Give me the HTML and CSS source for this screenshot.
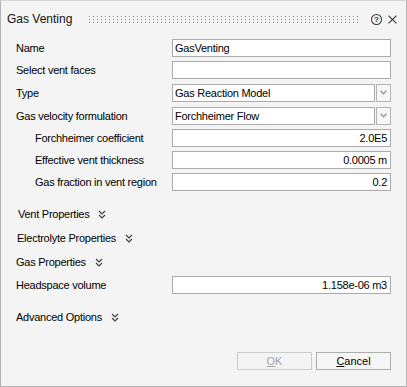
FILE: index.html
```html
<!DOCTYPE html>
<html>
<head>
<meta charset="utf-8">
<link rel="stylesheet" href="styles.css">
</head>
<body>
<div class="dialog">
  <div class="titlebar">
    <span class="title">Gas Venting</span>
    <svg class="grip" width="272" height="9">
      <defs>
        <pattern id="dots" width="4" height="3" patternUnits="userSpaceOnUse">
          <rect x="0" y="0" width="1" height="1" fill="#858585"/>
        </pattern>
      </defs>
      <rect x="0" y="0" width="272" height="9" fill="url(#dots)"/>
    </svg>
    <span class="help">?</span>
    <svg class="close" width="9" height="9" viewBox="0 0 9 9">
      <path d="M0.5 0.5 L8.5 8.5 M8.5 0.5 L0.5 8.5" stroke="#333" stroke-width="1.1" fill="none"/>
    </svg>
  </div>

  <div class="form">
    <div class="row">
      <span class="label">Name</span>
      <div class="field"><span class="input">GasVenting</span></div>
    </div>
    <div class="row">
      <span class="label">Select vent faces</span>
      <div class="field"><span class="input"></span></div>
    </div>
    <div class="row tall">
      <span class="label">Type</span>
      <div class="field combo"><span class="input">Gas Reaction Model</span><span class="dropbtn"><svg width="7" height="5" viewBox="0 0 7 5"><path d="M0.5 0.8 L3.5 3.8 L6.5 0.8" stroke="#9b9b9b" stroke-width="1.5" fill="none"/></svg></span></div>
    </div>
    <div class="row tall">
      <span class="label">Gas velocity formulation</span>
      <div class="field combo"><span class="input">Forchheimer Flow</span><span class="dropbtn"><svg width="7" height="5" viewBox="0 0 7 5"><path d="M0.5 0.8 L3.5 3.8 L6.5 0.8" stroke="#9b9b9b" stroke-width="1.5" fill="none"/></svg></span></div>
    </div>
    <div class="row">
      <span class="label sub">Forchheimer coefficient</span>
      <div class="field"><span class="input num">2.0E5</span></div>
    </div>
    <div class="row">
      <span class="label sub">Effective vent thickness</span>
      <div class="field"><span class="input num">0.0005 m</span></div>
    </div>
    <div class="row">
      <span class="label sub">Gas fraction in vent region</span>
      <div class="field"><span class="input num">0.2</span></div>
    </div>

    <div class="section first s2"><span>Vent Properties</span>
      <svg class="chev" width="8" height="9" viewBox="0 0 8 9"><path d="M1 1 L4 4 L7 1 M1 5 L4 8 L7 5" stroke="#404040" stroke-width="1.2" fill="none"/></svg>
    </div>
    <div class="section s1"><span>Electrolyte Properties</span>
      <svg class="chev" width="8" height="9" viewBox="0 0 8 9"><path d="M1 1 L4 4 L7 1 M1 5 L4 8 L7 5" stroke="#404040" stroke-width="1.2" fill="none"/></svg>
    </div>
    <div class="section"><span>Gas Properties</span>
      <svg class="chev" width="8" height="9" viewBox="0 0 8 9"><path d="M1 1 L4 4 L7 1 M1 5 L4 8 L7 5" stroke="#404040" stroke-width="1.2" fill="none"/></svg>
    </div>
    <div class="row">
      <span class="label">Headspace volume</span>
      <div class="field"><span class="input num">1.158e-06 m3</span></div>
    </div>
    <div class="section adv"><span>Advanced Options</span>
      <svg class="chev" width="8" height="9" viewBox="0 0 8 9"><path d="M1 1 L4 4 L7 1 M1 5 L4 8 L7 5" stroke="#404040" stroke-width="1.2" fill="none"/></svg>
    </div>
  </div>

  <div class="footer">
    <span class="btn disabled"><u>O</u>K</span>
    <span class="btn"><u>C</u>ancel</span>
  </div>
</div>
</body>
</html>
```

FILE: styles.css
```css
html, body {
  margin: 0;
  padding: 0;
  background: #f4f4f4;
}

.dialog {
  width: 407px;
  height: 387px;
  box-sizing: border-box;
  border: 1px solid #b3b3b3;
  border-top-color: #d6d6d6;
  background: #f4f4f4;
  display: flex;
  flex-direction: column;
  font-family: "Liberation Sans", Arial, sans-serif;
  font-size: 11px;
  letter-spacing: -0.25px;
  color: #000;
}

.titlebar {
  height: 36px;
  display: flex;
  align-items: center;
  padding: 0 9px 0 6px;
  flex-shrink: 0;
}

.title {
  font-size: 12px;
  letter-spacing: 0;
  color: #111;
  width: 66px;
  white-space: nowrap;
}

.grip {
  margin-left: 16px;
  margin-top: 2px;
  display: block;
}

.help {
  margin-left: 11px;
  width: 11px;
  height: 11px;
  box-sizing: border-box;
  border: 1px solid #333;
  border-radius: 50%;
  font-size: 8px;
  font-weight: bold;
  line-height: 9px;
  text-align: center;
  letter-spacing: 0;
  color: #333;
  margin-top: 1px;
}

.close {
  margin-left: 6px;
  display: block;
  margin-top: 1px;
}

.form {
  padding: 0 15px;
  display: flex;
  flex-direction: column;
}

.row {
  height: 22px;
  display: flex;
  align-items: center;
}

.row.tall {
  height: 23px;
}

.label {
  width: 156px;
  white-space: nowrap;
  flex-shrink: 0;
}

.label.sub {
  padding-left: 19px;
  box-sizing: border-box;
}

.field {
  flex: 1;
  display: flex;
  height: 18px;
}

.input {
  flex: 1;
  height: 18px;
  box-sizing: border-box;
  border: 1px solid #ababab;
  background: #fff;
  padding: 0 3px 0 2px;
  line-height: 16px;
  white-space: nowrap;
  overflow: hidden;
}

.input.num {
  text-align: right;
}

.dropbtn {
  width: 15px;
  height: 18px;
  box-sizing: border-box;
  margin-left: 1px;
  border: 1px solid #b5b5b5;
  background: #f7f7f7;
  display: flex;
  align-items: center;
  justify-content: center;
}

.dropbtn svg {
  display: block;
}

.section {
  height: 24px;
  display: flex;
  align-items: center;
  white-space: nowrap;
}

.section.first {
  margin-top: 9px;
}

.section.s2 {
  padding-left: 2px;
}

.section.s1 {
  padding-left: 1px;
}

.section.adv {
  margin-top: 9px;
}

.chev {
  margin-left: 9px;
  display: block;
}

.footer {
  margin-top: auto;
  display: flex;
  justify-content: flex-end;
  gap: 4px;
  padding: 0 15px 16px 0;
}

.btn {
  width: 75px;
  height: 18px;
  box-sizing: border-box;
  border: 1px solid #adadad;
  background: #f6f6f6;
  text-align: center;
  line-height: 16px;
  letter-spacing: 0;
}

.btn.disabled {
  color: #a3a3a3;
  border-color: #cccccc;
  background: #f4f4f4;
}
```
